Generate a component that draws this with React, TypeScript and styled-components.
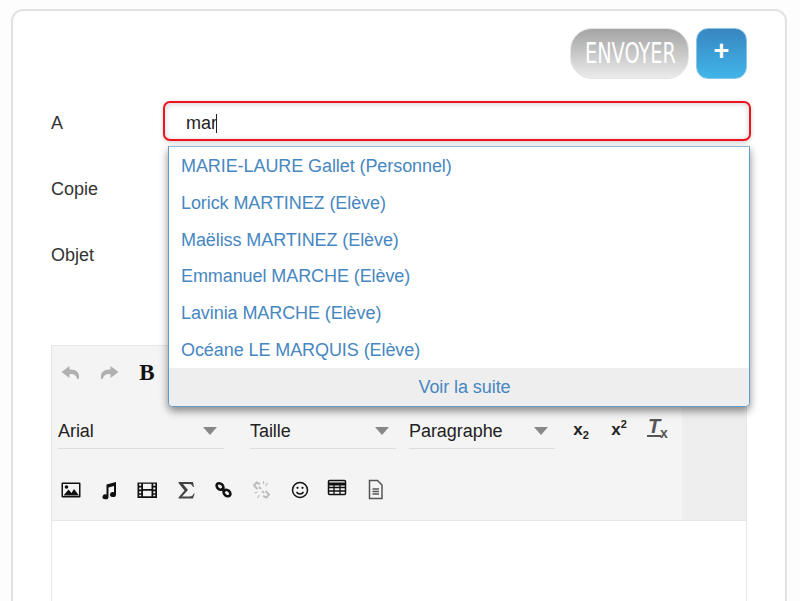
import React from "react";
import styled, { createGlobalStyle } from "styled-components";

const GlobalStyle = createGlobalStyle`
	html, body {
		margin: 0;
		height: 601px;
		overflow: hidden;
		background: #fdfdfd;
		font-family: "Liberation Sans", Arial, sans-serif;
		font-size: 18px;
		color: #333;
	}
`;

const Card = styled.div`
	box-sizing: border-box;
	margin: 9px 13px 0 11px;
	height: 640px;
	padding: 17px 38px 0;
	background: #fff;
	border: 2px solid #e2e2e2;
	border-radius: 12px;
`;

const TopBar = styled.div`
	display: flex;
	justify-content: flex-end;
	gap: 7px;
`;

const SendButton = styled.button`
	width: 119px;
	height: 51px;
	padding: 0 0 2px;
	border: 1px solid #e4e4e4;
	border-radius: 22px;
	background: linear-gradient(#a3a3a3, #ececec);
	color: #fff;
	font-family: "DejaVu Sans Condensed", "DejaVu Sans", sans-serif;
	font-size: 29px;
	font-weight: 200;
	overflow: hidden;
	span {
		display: inline-block;
		transform: translateX(-2px) scaleX(0.74);
	}
`;

const PlusButton = styled.button`
	width: 51px;
	height: 51px;
	padding: 0 0 4px;
	border: 1px solid #8cc6e6;
	border-radius: 12px;
	background: linear-gradient(#3886c0, #40b5e9);
	color: #fff;
	font-family: "Liberation Sans", sans-serif;
	font-size: 27px;
	font-weight: 700;
`;

const Form = styled.div`
	display: grid;
	grid-template-columns: 112px 1fr;
	grid-auto-rows: 40px;
	row-gap: 26px;
	margin-top: 22px;
`;

const Label = styled.div`
	display: flex;
	align-items: center;
	padding-top: 4px;
`;

const Field = styled.div`
	position: relative;
	margin-right: -4px;
`;

const ActiveInput = styled.div`
	box-sizing: border-box;
	height: 40px;
	padding: 4px 21px 0;
	display: flex;
	align-items: center;
	border: 2px solid #f0141c;
	border-radius: 7px;
	background: #fff;
	box-shadow: inset 0 1px 6px rgba(0, 0, 0, 0.18), 0 1px 4px rgba(0, 0, 0, 0.2);
	color: #222;
	&::after {
		content: "";
		width: 1px;
		height: 19px;
		margin-left: -1px;
		background: #222;
	}
`;

const Dropdown = styled.div`
	position: absolute;
	z-index: 2;
	top: 45px;
	left: 5px;
	width: 582px;
	box-sizing: border-box;
	background: #fff;
	border: 1px solid #5f9bcb;
	border-top-color: #8fb9da;
	border-radius: 0 0 5px 5px;
	box-shadow: 0 4px 8px rgba(0, 0, 0, 0.45);
	overflow: hidden;
`;

const Option = styled.div`
	height: 36.8px;
	padding-left: 12px;
	line-height: 38px;
	letter-spacing: -0.08px;
	color: #4787c1;
	white-space: nowrap;
`;

const MoreRow = styled.div`
	height: 38px;
	padding-left: 11px;
	line-height: 38px;
	letter-spacing: -0.08px;
	text-align: center;
	background: #eee;
	color: #4787c1;
`;

const Editor = styled.div`
	margin-top: 72px;
	border: 1px solid #e6e6e6;
	background: #fff;
`;

const Toolbar = styled.div`
	display: flex;
	height: 174px;
	background: #eeeeee;
	border-bottom: 1px solid #e6e6e6;
`;

const ToolGroups = styled.div`
	width: 630px;
	background: #f4f4f4;
`;

const ToolRow = styled.div<{ $height: number }>`
	display: flex;
	align-items: center;
	height: ${(p) => p.$height}px;
`;

const Tool = styled.div<{ $dim?: boolean; $lift?: number; $shift?: number }>`
	flex: none;
	width: 38px;
	display: flex;
	align-items: center;
	justify-content: center;
	margin-left: ${(p) => p.$shift ?? 0}px;
	padding-bottom: ${(p) => p.$lift ?? 0}px;
	color: ${(p) => (p.$dim ? "#bdbdbd" : "#111")};
`;

const BoldGlyph = styled.span`
	font-family: "Liberation Serif", serif;
	font-weight: 700;
	font-size: 23px;
	color: #111;
`;

const ScriptGlyph = styled.span`
	font-weight: 700;
	font-size: 17px;
	color: #222;
	sub, sup {
		font-size: 11px;
		line-height: 0;
	}
`;

const ClearGlyph = styled.span`
	position: relative;
	font-family: "Liberation Sans", sans-serif;
	font-style: italic;
	font-weight: 700;
	font-size: 20px;
	line-height: 17px;
	color: #555;
	border-bottom: 2px solid #555;
	margin: 0 6px 4px 0;
	padding: 0 1px;
	&::after {
		content: "x";
		position: absolute;
		left: 13px;
		bottom: -5px;
		font-style: normal;
		font-size: 14px;
		line-height: 13px;
	}
`;

const Select = styled.div<{ $width: number; $gap: number }>`
	box-sizing: border-box;
	flex: none;
	display: flex;
	align-items: center;
	justify-content: space-between;
	width: ${(p) => p.$width}px;
	height: 36px;
	margin-left: ${(p) => p.$gap}px;
	margin-top: 3px;
	padding: 1px 7px 0 0;
	border-bottom: 1px solid #ddd;
	letter-spacing: -0.05px;
	color: #222;
	&::after {
		content: "";
		border-left: 7px solid transparent;
		border-right: 7px solid transparent;
		border-top: 8px solid #888;
	}
`;

const Body = styled.div`
	height: 200px;
`;

const Icon = ({ children, dim, shift = 0 }: { children: React.ReactNode; dim?: boolean; shift?: number }) => (
	<Tool $dim={dim}>
		<svg width={22} height={22} viewBox="0 0 22 22" fill="currentColor">
			<g transform={`translate(${shift} 0)`}>{children}</g>
		</svg>
	</Tool>
);

const recipients = [
	"MARIE-LAURE Gallet (Personnel)",
	"Lorick MARTINEZ (Elève)",
	"Maëliss MARTINEZ (Elève)",
	"Emmanuel MARCHE (Elève)",
	"Lavinia MARCHE (Elève)",
	"Océane LE MARQUIS (Elève)",
];

const App = (): JSX.Element => (
	<>
		<GlobalStyle />
		<Card>
			<TopBar>
				<SendButton><span>ENVOYER</span></SendButton>
				<PlusButton>+</PlusButton>
			</TopBar>
			<Form>
				<Label>A</Label>
				<Field>
					<ActiveInput>mar</ActiveInput>
					<Dropdown>
						{recipients.map((name) => (
							<Option key={name}>{name}</Option>
						))}
						<MoreRow>Voir la suite</MoreRow>
					</Dropdown>
				</Field>
				<Label>Copie</Label>
				<div />
				<Label>Objet</Label>
				<div />
			</Form>
			<Editor>
				<Toolbar>
					<ToolGroups>
						<ToolRow $height={54}>
							<Icon dim>
								<path d="M9.500 4 1.500 10l8 6v-4c4-.3 6 .6 7 3 .7 2.500 2 3 2.500 1 .8-6-3.500-9-9.500-8.500z" fill="#b0b0b0" />
							</Icon>
							<Icon dim>
								<path d="M12.500 4l8 6-8 6v-4c-4-.3-6 .6-7 3-.7 2.500-2 3-2.500 1-.8-6 3.500-9 9.500-8.500z" fill="#b0b0b0" />
							</Icon>
							<Tool><BoldGlyph>B</BoldGlyph></Tool>
						</ToolRow>
						<ToolRow $height={59}>
							<Select $width={166} $gap={6}>Arial</Select>
							<Select $width={146} $gap={26}>Taille</Select>
							<Select $width={146} $gap={13}>Paragraphe</Select>
							<Tool $shift={7}><ScriptGlyph>x<sub>2</sub></ScriptGlyph></Tool>
							<Tool><ScriptGlyph>x<sup>2</sup></ScriptGlyph></Tool>
							<Tool><ClearGlyph>T</ClearGlyph></Tool>
						</ToolRow>
						<ToolRow $height={61}>
							<Icon>
								<path fillRule="evenodd" d="M2.500 3.500h17a1 1 0 0 1 1 1v13a1 1 0 0 1-1 1h-17a1 1 0 0 1-1-1v-13a1 1 0 0 1 1-1zm.500 1.500v12h16V5z" />
								<circle cx="6.500" cy="8" r="1.800" />
								<path d="M3.500 16.500l5-6 3 3.500 2.500-4 5 6.500z" />
							</Icon>
							<Icon shift={0.500}>
								<path d="M8 5.500 17.500 3v12.500a3 2.500 0 1 1-2-2.300V7L10 8.500v9.300a3 2.500 0 1 1-2-2.300z" />
							</Icon>
							<Icon shift={0.500}>
								<path fillRule="evenodd" d="M1 3.500h19.500v15.500H1zm1.700 1.300v2h2v-2zm0 3.700v2h2v-2zm0 3.700v2h2v-2zm0 3.500v1.500h2v-1.500zM16.800 4.800v2h2v-2zm0 3.700v2h2v-2zm0 3.700v2h2v-2zm0 3.500v1.500h2v-1.500zM6.500 4.800v5.200h8.500V4.800zm0 7v5.400h8.500v-5.400z" />
							</Icon>
							<Icon shift={1.500}>
								<path d="M3 3h14.500l1 5h-1c-.6-2-1.600-3-4-3H7.500l5 6-6 6.500h7.500c2.500 0 3.500-1 4.200-3h1l-1.700 5H3v-1l6-7-6-7.500z" fill="#444" />
							</Icon>
							<Icon shift={1.500}>
								<g fill="none" stroke="currentColor" strokeWidth="2.600">
									<ellipse cx="6.500" cy="7.500" rx="3.800" ry="2.800" transform="rotate(40 6.500 7.500)" />
									<ellipse cx="13.500" cy="14" rx="3.800" ry="2.800" transform="rotate(40 13.500 14)" />
									<path d="M8 9l4 3.500" />
								</g>
							</Icon>
							<Icon dim shift={1.500}>
								<g fill="none" stroke="currentColor" strokeWidth="2">
									<path d="M8.500 5 5 3.500 2.500 6.500 6 10M11.500 17l3.500 1.500 2.500-3-3.500-3.500M7.500 8l2 2M10.500 12l2 2" />
									<path d="M12 2v3M16 4l-2 3M3 14l3-1M6 19l2-3" strokeWidth="1.200" />
								</g>
							</Icon>
							<Icon shift={1}>
								<g fill="none" stroke="currentColor" strokeWidth="1.500">
									<circle cx="11" cy="11" r="7.500" />
									<path d="M7.500 13c1.800 2.600 5.200 2.600 7 0" />
								</g>
								<circle cx="8.500" cy="8.800" r="1.100" />
								<circle cx="13.500" cy="8.800" r="1.100" />
							</Icon>
							<Tool $lift={4}>
								<svg width="20" height="18" viewBox="0 0 20 18" fill="none" stroke="#111">
									<rect x="1.500" y="1.500" width="17" height="14" rx="1" strokeWidth="1.500" />
									<path d="M1 5h18" strokeWidth="3" />
									<path d="M7 4v11M13 4v11M1 8.500h18M1 12h18" strokeWidth="1.300" />
								</svg>
							</Tool>
							<Icon shift={1}>
								<path d="M4.500 1.500h8l4.500 4.500v13.500H4.500z" fill="none" stroke="#555" strokeWidth="1.500" />
								<path d="M7.500 10h6.500M7.500 12.500h6.500M7.500 15h6.500" stroke="#555" strokeWidth="1.300" />
							</Icon>
						</ToolRow>
					</ToolGroups>
				</Toolbar>
				<Body />
			</Editor>
		</Card>
	</>
);

export default App;
